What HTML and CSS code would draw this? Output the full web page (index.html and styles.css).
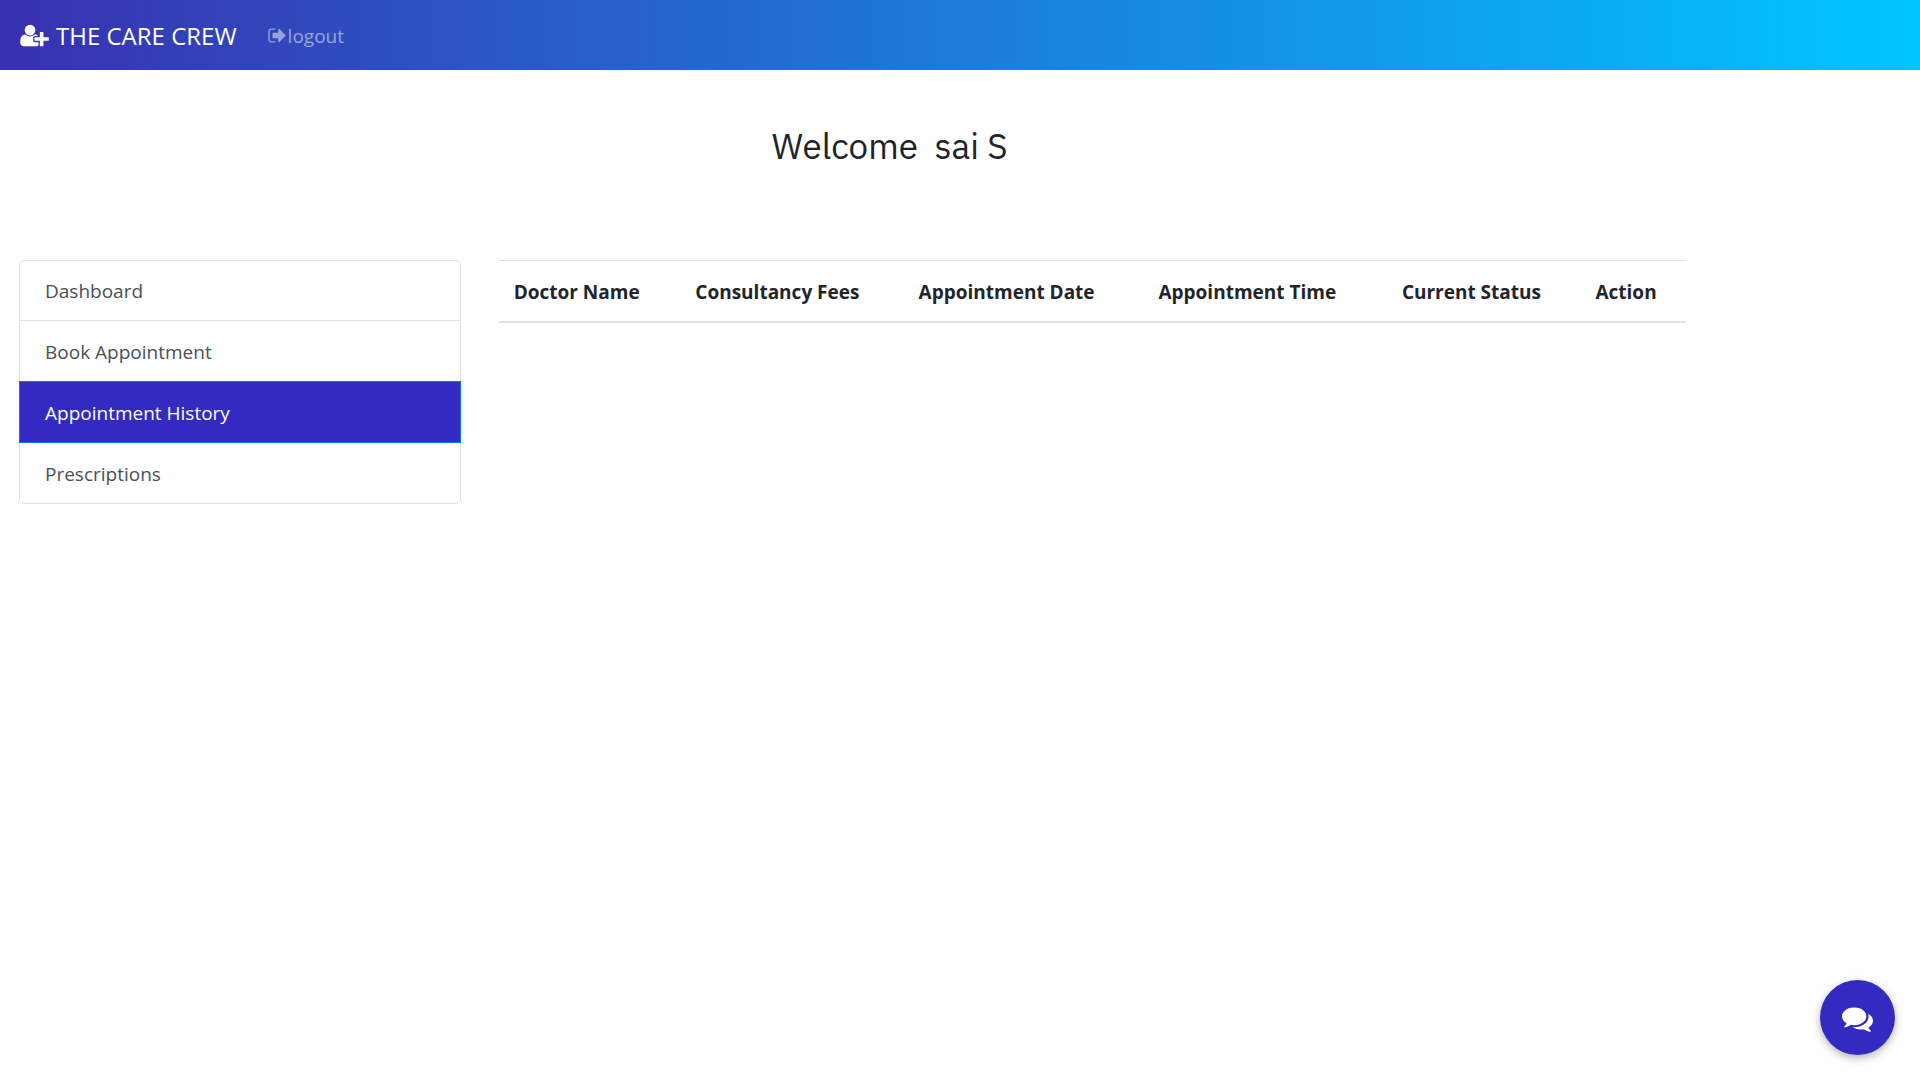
FILE: index.html
```html
<!DOCTYPE html>
<html lang="en">
<head>
<meta charset="utf-8">
<meta name="viewport" content="width=device-width, initial-scale=1">
<title>The Care Crew</title>
<link rel="stylesheet" href="styles.css">
</head>
<body>
<nav class="navbar">
  <a class="brand" href="#">
    <svg class="icon-user" viewBox="0 0 2048 1792" aria-hidden="true"><path d="M704 896q-159 0-271.500-112.500t-112.500-271.500 112.500-271.500 271.500-112.500 271.500 112.500 112.500 271.500-112.500 271.500-271.500 112.500zm960 128h352q13 0 22.500 9.500t9.500 22.500v192q0 13-9.500 22.500t-22.500 9.500h-352v352q0 13-9.500 22.500t-22.500 9.500h-192q-13 0-22.500-9.500t-9.500-22.500v-352h-352q-13 0-22.500-9.500t-9.500-22.500v-192q0-13 9.500-22.500t22.500-9.500h352v-352q0-13 9.500-22.500t22.500-9.500h192q13 0 22.500 9.500t9.500 22.500v352zm-736 224q0 52 38 90t90 38h256v238q-68 50-171 50h-874q-121 0-194-69t-73-190q0-53 3.500-103.500t14-109 26.500-108.500 43-97.500 62-81 85.500-53.500 111.500-20q19 0 39 17 79 61 154.500 91.500t164.500 30.500 164.500-30.500 154.500-91.500q20-17 39-17 132 0 217 96h-223q-52 0-90 38t-38 90v192z"/></svg>
    <span class="nav-label">THE CARE CREW</span>
  </a>
  <a class="logout" href="#">
    <svg class="icon-logout" viewBox="64 128 1664 1536" aria-hidden="true"><path d="M704 1440q0 4 1 20t.5 26.500-3 23.500-10 19.500-20.500 6.500h-320q-119 0-203.500-84.500t-84.500-203.500v-704q0-119 84.500-203.500t203.500-84.500h320q13 0 22.500 9.500t9.500 22.500q0 4 1 20t.5 26.500-3 23.500-10 19.500-20.500 6.500h-320q-66 0-113 47t-47 113v704q0 66 47 113t113 47h312l11.500 1 11.500 3 8 5.500 7 9 2 13.500zm928-544q0 26-19 45l-544 544q-19 19-45 19t-45-19-19-45v-288h-448q-26 0-45-19t-19-45v-384q0-26 19-45t45-19h448v-288q0-26 19-45t45-19 45 19l544 544q19 19 19 45z"/></svg>
    <span class="nav-label">logout</span>
  </a>
</nav>
<main class="page">
  <h3 class="welcome">Welcome &nbsp;sai S</h3>
  <div class="row">
    <div class="menu">
      <a class="item" href="#">Dashboard</a>
      <a class="item" href="#">Book Appointment</a>
      <a class="item active" href="#" aria-current="page">Appointment History</a>
      <a class="item" href="#">Prescriptions</a>
    </div>
    <table class="history">
      <colgroup>
        <col class="c-doctor"><col class="c-fees"><col class="c-date"><col class="c-time"><col class="c-status"><col class="c-action">
      </colgroup>
      <thead>
        <tr>
          <th scope="col">Doctor Name</th>
          <th scope="col">Consultancy Fees</th>
          <th scope="col">Appointment Date</th>
          <th scope="col">Appointment Time</th>
          <th scope="col">Current Status</th>
          <th scope="col">Action</th>
        </tr>
      </thead>
      <tbody></tbody>
    </table>
  </div>
</main>
<button class="chat" type="button" aria-label="Open chat">
  <svg class="icon-chat" viewBox="0 0 1792 1792" aria-hidden="true"><path d="M1408 768q0 139-94 257t-256.500 186.500-353.500 68.500q-86 0-176-16-124 88-278 128-36 9-86 16h-3q-11 0-20.500-8t-11.500-21q-1-3-1-6.500t.5-6.500 2-6l2.500-5 3.500-5.500 4-5 4.500-5 4-4.500q5-6 23-25t26-29.500 22.500-29 25-38.500 20.500-44q-124-72-195-177t-71-224q0-139 94-257t256.500-186.500 353.500-68.500 353.500 68.500 256.500 186.500 94 257zm384 256q0 120-71 224.500t-195 176.500q10 24 20.500 44t25 38.500 22.500 29 26 29.500 23 25q1 1 4 4.500t4.500 5 4 5 3.500 5.500l2.500 5 2 6 .5 6.500-1 6.500q-3 14-13 22t-22 7q-50-7-86-16-154-40-278-128-90 16-176 16-271 0-472-132 58 4 88 4 161 0 309-45t264-129q125-92 192-212t67-254q0-77-23-152 129 71 204 178t75 230z"/></svg>
</button>
</body>
</html>
```
FILE: styles.css
```css
* {
  box-sizing: border-box;
}

body {
  margin: 0;
  background: #fff;
  color: #212529;
  font-family: "Segoe UI", "Open Sans", "Noto Sans", sans-serif;
  font-size: 19px;
  line-height: 30px;
}

a {
  text-decoration: none;
}

svg {
  display: block;
  fill: currentColor;
}

.navbar {
  display: flex;
  align-items: center;
  gap: 31px;
  min-height: 70px;
  padding: 0 20px;
  background: linear-gradient(to right, #3931af, #00c6ff);
}

.nav-label {
  padding-top: 2px;
}

.brand {
  display: flex;
  align-items: center;
  gap: 7px;
  color: #fff;
  font-size: 24px;
}

.icon-user {
  width: 29px;
  height: 25px;
}

.logout {
  display: flex;
  align-items: center;
  gap: 1px;
  color: rgba(255, 255, 255, 0.5);
}

.icon-logout {
  width: 19px;
  height: 17px;
}

.page {
  padding: 50px 19px;
}

.welcome {
  margin: 0 0 85px 40%;
  padding: 3px 0 6px;
  font-family: "IBM Plex Sans", "Open Sans", sans-serif;
  font-size: 35px;
  font-weight: 400;
  line-height: 46px;
}

.row {
  display: flex;
  align-items: flex-start;
  gap: 2%;
}

.menu {
  display: flex;
  flex-direction: column;
  width: 442px;
  border: 1px solid #dfdfdf;
  border-radius: 5px;
}

.item {
  padding: 16px 25px 14px;
  border-top: 1px solid #dfdfdf;
  color: #495057;
}

.item:first-child {
  margin-top: -1px;
  border-top: 0;
}

.item.active {
  margin: 0 -1px -1px;
  border: 1px solid #007bff;
  background: #342ac1;
  color: #fff;
}

.item.active + .item {
  border-top-color: transparent;
}

.history {
  flex: 0 1 63.1%;
  border-collapse: collapse;
  table-layout: fixed;
}

.history th {
  padding: 16px 15px 14px;
  border-top: 1px solid #dee2e6;
  border-bottom: 2px solid #dee2e6;
  font-weight: 700;
  text-align: left;
  white-space: nowrap;
}

.c-doctor { width: 15.3%; }
.c-fees { width: 18.8%; }
.c-date { width: 20.2%; }
.c-time { width: 20.5%; }
.c-status { width: 16.3%; }
.c-action { width: 8.9%; }

.chat {
  position: fixed;
  right: 25px;
  bottom: 25px;
  display: grid;
  place-items: center;
  width: 75px;
  height: 75px;
  padding: 2px 0 0;
  border: 0;
  border-radius: 50%;
  background: #342ac1;
  color: #fff;
  box-shadow: 0 3px 8px rgba(0, 0, 0, 0.3);
}

.icon-chat {
  width: 31px;
  height: 31px;
}
```
